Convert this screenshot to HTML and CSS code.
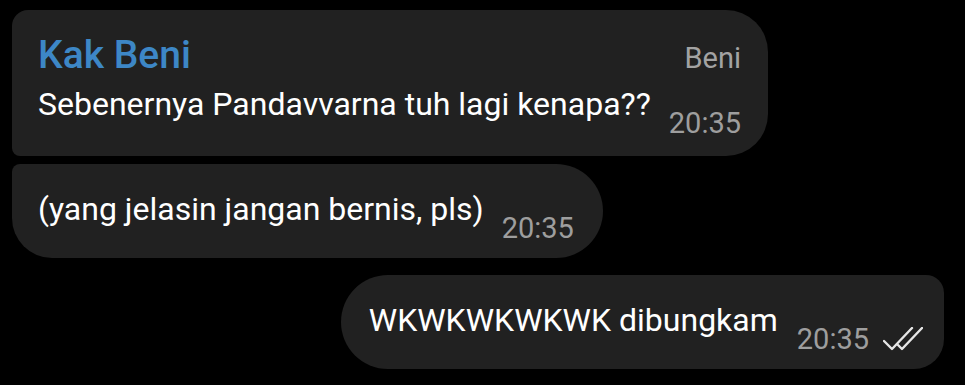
FILE: index.html
```html
<!doctype html>
<html lang="id">
  <head>
    <meta charset="utf-8">
    <link rel="stylesheet" href="styles.css">
  </head>
  <body>
    <div class="chat">
      <div class="bubble in first">
        <div class="head">
          <span class="name">Kak Beni</span>
          <span class="tag">Beni</span>
        </div>
        <div class="row">
          <span class="text">Sebenernya Pandavvarna tuh lagi kenapa??</span>
          <span class="time">20:35</span>
        </div>
      </div>
      <div class="bubble in last">
        <div class="row">
          <span class="text">(yang jelasin jangan bernis, pls)</span>
          <span class="time">20:35</span>
        </div>
      </div>
      <div class="bubble out">
        <div class="row">
          <span class="text">WKWKWKWKWK dibungkam</span>
          <span class="time">20:35</span>
          <svg class="checks" width="40" height="24" viewBox="0 0 40 24">
            <path d="M1 14 L9 22 L29 1" />
            <path d="M15 18 L19 22 L39 1" />
          </svg>
        </div>
      </div>
    </div>
  </body>
</html>
```

FILE: styles.css
```css
body {
  margin: 0;
  background-color: #000;
  font-family: Roboto, "Noto Sans", sans-serif;
  color: #fff;
}

.chat {
  display: flex;
  flex-direction: column;
  align-items: flex-start;
  padding: 10px 21px 0 12px;
}

.bubble {
  background-color: #212121;
  padding: 0 27px 0 26px;
}

.bubble.first {
  padding-top: 22px;
  padding-bottom: 18px;
  border-radius: 16px 42px 42px 8px;
}

.bubble.last {
  margin-top: 8px;
  padding-top: 26px;
  padding-bottom: 15px;
  padding-right: 29px;
  border-radius: 8px 47px 47px 40px;
}

.bubble.out {
  align-self: flex-end;
  margin-top: 17px;
  padding-top: 26px;
  padding-bottom: 15px;
  padding-right: 21px;
  padding-left: 28px;
  border-radius: 47px 18px 30px 47px;
}

.head {
  display: flex;
  justify-content: space-between;
  align-items: baseline;
  margin-bottom: 7px;
}

.name {
  color: #3d87c6;
  font-size: 39px;
  font-weight: 500;
  line-height: 46px;
}

.tag {
  color: #a3a3a3;
  font-size: 29px;
}

.row {
  display: flex;
  align-items: flex-end;
}

.text {
  font-size: 32px;
  line-height: 38px;
  padding-bottom: 15px;
  margin-right: 18px;
}

.time {
  color: #9e9e9e;
  font-size: 29px;
  line-height: 30px;
}

.out .text {
  margin-right: 19px;
}

.checks {
  margin-left: 14px;
  margin-bottom: 3px;
  fill: none;
  stroke: #e6e6e6;
  stroke-width: 2.4;
  stroke-linecap: round;
  stroke-linejoin: round;
}
```
